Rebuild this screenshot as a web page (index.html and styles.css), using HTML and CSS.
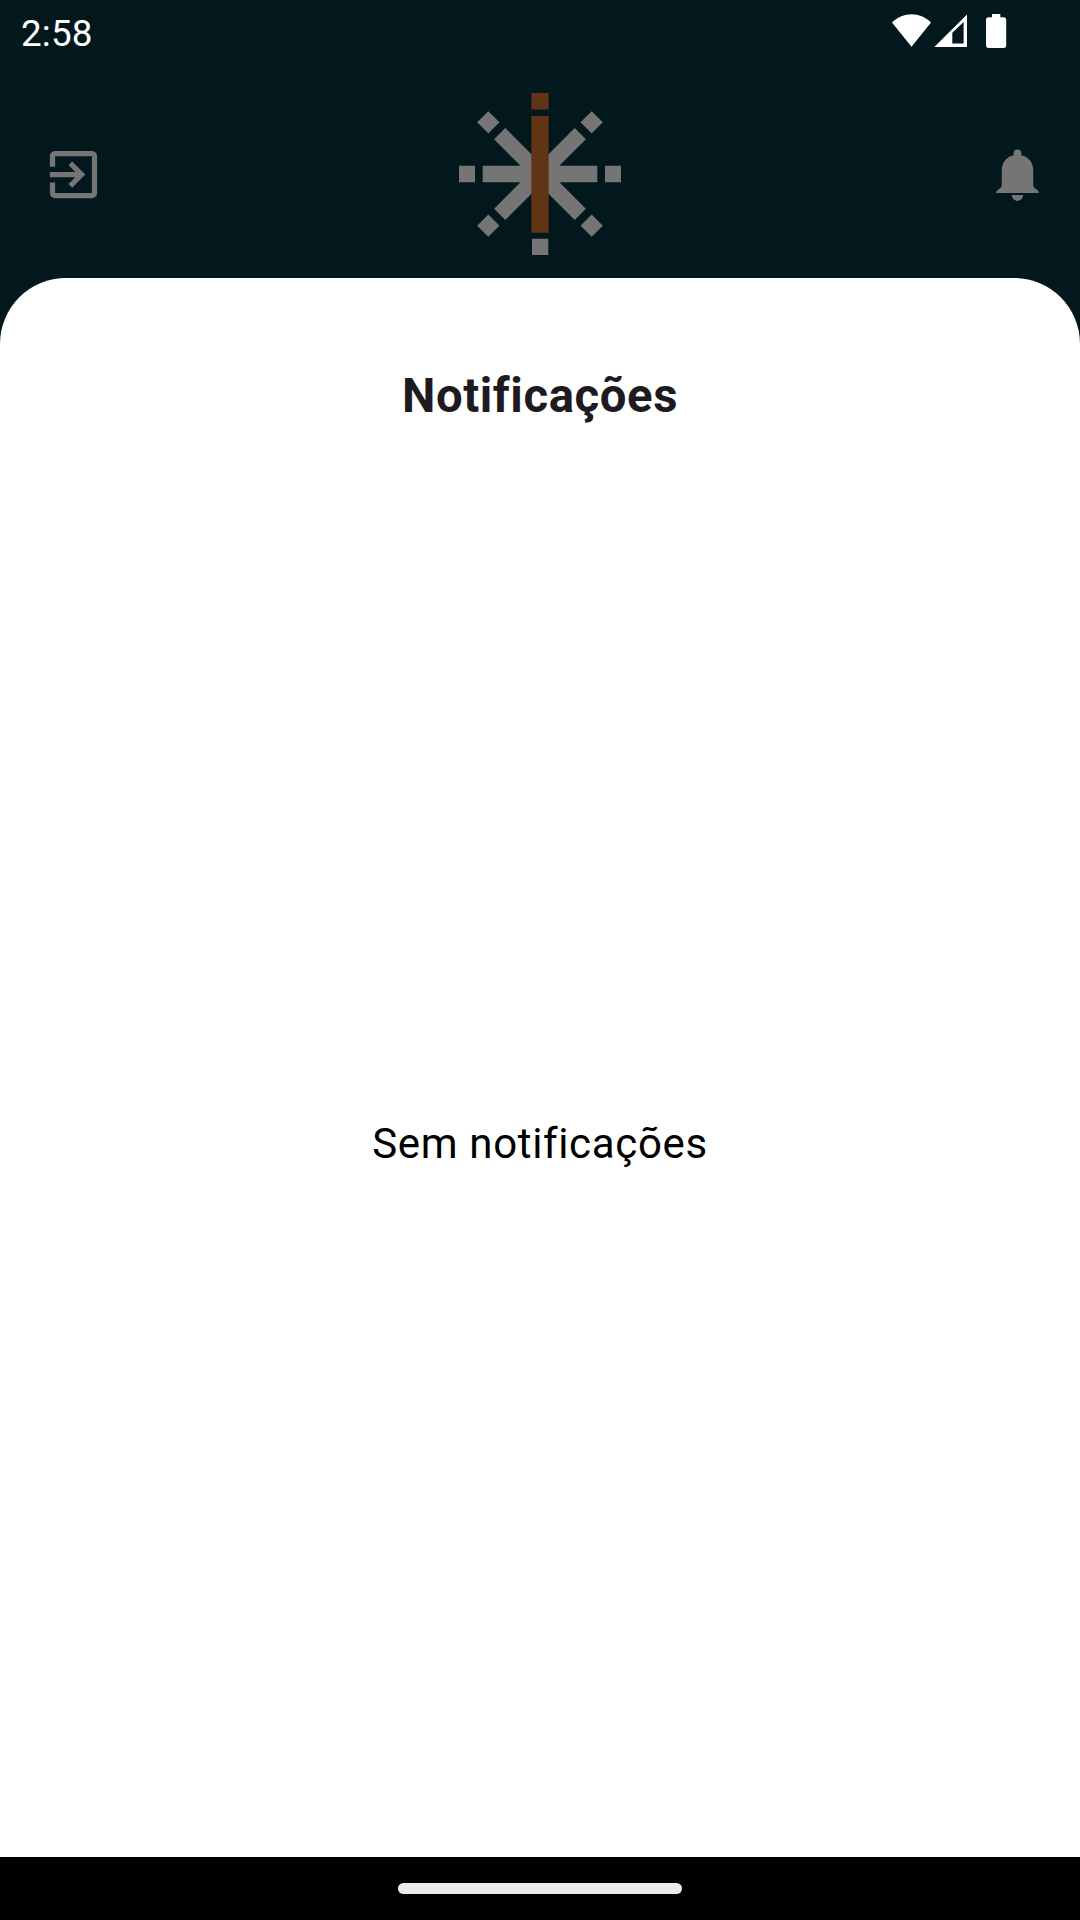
FILE: index.html
```
<!DOCTYPE html>
<html lang="pt-BR">
<head>
    <meta charset="UTF-8">
    <meta name="viewport" content="width=device-width, initial-scale=1.0">
    <title>Notificações</title>
    <link rel="stylesheet" href="styles.css">
</head>
<body>
    <div class="screen">
        <div class="status-bar">
            <span class="clock">2:58</span>
            <svg class="status-icons" width="120" height="40" viewBox="890 12 120 40">
                <path d="M892 22.5C903 11.5 920 11.5 931 22.5L911.5 46.7z"/>
                <path fill-rule="evenodd" d="M934.3 47L967 14.5V47zM952.3 43.5H963.6V22L952.3 32.7z"/>
                <path d="M992 14h8.3v3.3h3.2q2.7 0 2.7 2.7v25.3q0 2.7-2.7 2.7h-14.8q-2.7 0-2.7-2.7V20q0-2.7 2.7-2.7h3.3z"/>
            </svg>
        </div>
        <div class="header">
            <svg class="icon" viewBox="0 0 24 24">
                <path d="M10.09 15.59L11.5 17l5-5-5-5-1.41 1.41L12.67 11H3v2h9.67l-2.58 2.59zM19 3H5c-1.11 0-2 .9-2 2v4h2V5h14v14H5v-4H3v4c0 1.1.89 2 2 2h14c1.1 0 2-.9 2-2V5c0-1.1-.9-2-2-2z"/>
            </svg>
            <svg class="logo" viewBox="-81 -81 162 162">
                <g class="rays">
                    <path d="M-57.3-8.2H57.3V8.2H-57.3zM-81-8.2h16V8.2h-16zM65-8.2h16V8.2H65zM-8 64.8H8.3V81H-8z"/>
                    <path transform="rotate(45)" d="M-57-7.9H57V7.9H-57zM-81-7.9h15.8V7.9H-81zM65.2-7.9H81V7.9H65.2z"/>
                    <path transform="rotate(-45)" d="M-57-7.9H57V7.9H-57zM-81-7.9h15.8V7.9H-81zM65.2-7.9H81V7.9H65.2z"/>
                </g>
                <path class="stem" d="M-8.7-81H8.7v16.6H-8.7zM-8.7-58H8.7V58.7H-8.7z"/>
            </svg>
            <svg class="icon" viewBox="0 0 24 24">
                <path d="M9.85 19.85h4.3c0 1.3-.95 2.2-2.15 2.2s-2.15-.9-2.15-2.2zM3.9 19c0-.5.2-.8.6-1.1C5.4 17.2 6 16.9 6 16V10.4C6 7.4 8 5.2 10.5 4.7V4a1.5 1.5 0 0 1 3 0v.7C16 5.2 18 7.4 18 10.4V16c0 .9.6 1.2 1.5 1.9.4.3.6.6.6 1.1z"/>
            </svg>
        </div>
        <div class="sheet">
            <h1 class="title">Notificações</h1>
            <div class="empty">Sem notificações</div>
        </div>
        <div class="nav-bar">
            <div class="handle"></div>
        </div>
    </div>
</body>
</html>
```
FILE: styles.css
```
:root {
    --background-color: #02181d;
    --icon-color: #757575;
    --accent-color: #5f3516;
}
* {
    box-sizing: border-box;
}
body {
    font-family: Roboto, sans-serif;
    margin: 0;
    background-color: var(--background-color);
}
.screen {
    display: flex;
    flex-direction: column;
    width: 1080px;
    height: 1920px;
    overflow: hidden;
}
.status-bar {
    display: flex;
    justify-content: space-between;
    align-items: flex-start;
    height: 63px;
    padding: 12px 70px 0 21px;
    color: white;
}
.clock {
    font-size: 36.75px;
    line-height: 43px;
    letter-spacing: 0.2px;
}
.status-icons {
    fill: white;
}
.header {
    display: flex;
    justify-content: space-between;
    align-items: center;
    height: 215px;
    padding: 0 31.5px 0 42px;
}
.icon {
    width: 63px;
    height: 63px;
    margin-top: 8px;
    fill: var(--icon-color);
}
.logo {
    width: 162px;
    height: 162px;
    margin: 7px 0 0 -10.5px;
}
.rays {
    fill: var(--icon-color);
}
.stem {
    fill: var(--accent-color);
}
.sheet {
    flex-grow: 1;
    display: flex;
    flex-direction: column;
    padding-top: 90px;
    border-radius: 66px 66px 0 0;
    background-color: white;
    text-align: center;
}
.title {
    margin: 0 0 5px;
    font-size: 47.25px;
    font-weight: 700;
    line-height: 56px;
    letter-spacing: 0.6px;
    color: #1d1b20;
}
.empty {
    flex-grow: 1;
    display: flex;
    justify-content: center;
    align-items: center;
    font-size: 42px;
    letter-spacing: 0.65px;
    color: black;
}
.nav-bar {
    display: flex;
    justify-content: center;
    height: 63px;
    padding-top: 26px;
    background-color: black;
}
.handle {
    width: 284px;
    height: 11px;
    border-radius: 6px;
    background-color: #ebebeb;
}
```
